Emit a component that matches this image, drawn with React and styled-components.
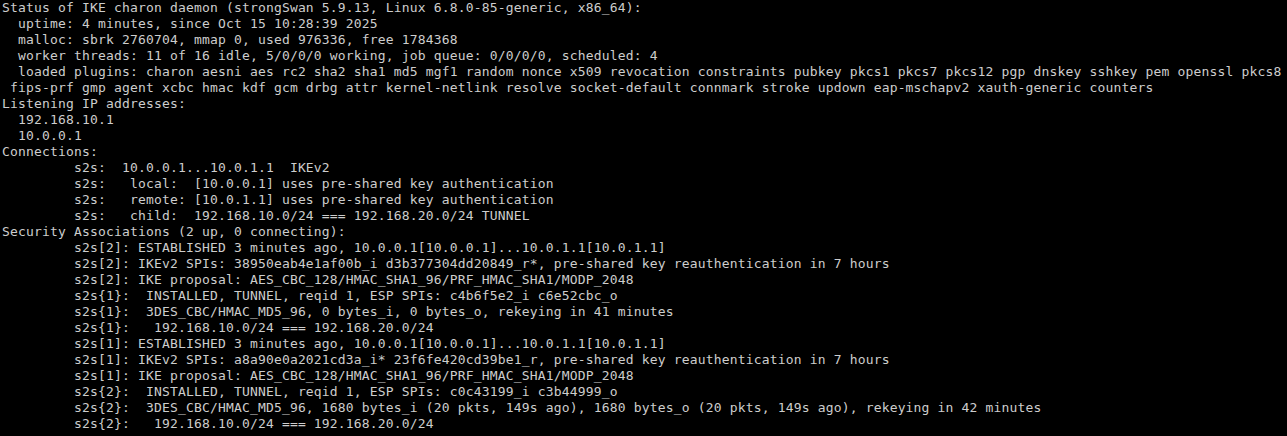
import React from 'react';
import styled, { createGlobalStyle } from 'styled-components';

// ipsec statusall output, one entry per console row (160 columns, so long lines are pre-wrapped)
const lines = [
  'Status of IKE charon daemon (strongSwan 5.9.13, Linux 6.8.0-85-generic, x86_64):',
  '  uptime: 4 minutes, since Oct 15 10:28:39 2025',
  '  malloc: sbrk 2760704, mmap 0, used 976336, free 1784368',
  '  worker threads: 11 of 16 idle, 5/0/0/0 working, job queue: 0/0/0/0, scheduled: 4',
  '  loaded plugins: charon aesni aes rc2 sha2 sha1 md5 mgf1 random nonce x509 revocation constraints pubkey pkcs1 pkcs7 pkcs12 pgp dnskey sshkey pem openssl pkcs8',
  ' fips-prf gmp agent xcbc hmac kdf gcm drbg attr kernel-netlink resolve socket-default connmark stroke updown eap-mschapv2 xauth-generic counters',
  'Listening IP addresses:',
  '  192.168.10.1',
  '  10.0.0.1',
  'Connections:',
  '         s2s:  10.0.0.1...10.0.1.1  IKEv2',
  '         s2s:   local:  [10.0.0.1] uses pre-shared key authentication',
  '         s2s:   remote: [10.0.1.1] uses pre-shared key authentication',
  '         s2s:   child:  192.168.10.0/24 === 192.168.20.0/24 TUNNEL',
  'Security Associations (2 up, 0 connecting):',
  '         s2s[2]: ESTABLISHED 3 minutes ago, 10.0.0.1[10.0.0.1]...10.0.1.1[10.0.1.1]',
  '         s2s[2]: IKEv2 SPIs: 38950eab4e1af00b_i d3b377304dd20849_r*, pre-shared key reauthentication in 7 hours',
  '         s2s[2]: IKE proposal: AES_CBC_128/HMAC_SHA1_96/PRF_HMAC_SHA1/MODP_2048',
  '         s2s{1}:  INSTALLED, TUNNEL, reqid 1, ESP SPIs: c4b6f5e2_i c6e52cbc_o',
  '         s2s{1}:  3DES_CBC/HMAC_MD5_96, 0 bytes_i, 0 bytes_o, rekeying in 41 minutes',
  '         s2s{1}:   192.168.10.0/24 === 192.168.20.0/24',
  '         s2s[1]: ESTABLISHED 3 minutes ago, 10.0.0.1[10.0.0.1]...10.0.1.1[10.0.1.1]',
  '         s2s[1]: IKEv2 SPIs: a8a90e0a2021cd3a_i* 23f6fe420cd39be1_r, pre-shared key reauthentication in 7 hours',
  '         s2s[1]: IKE proposal: AES_CBC_128/HMAC_SHA1_96/PRF_HMAC_SHA1/MODP_2048',
  '         s2s{2}:  INSTALLED, TUNNEL, reqid 1, ESP SPIs: c0c43199_i c3b44999_o',
  '         s2s{2}:  3DES_CBC/HMAC_MD5_96, 1680 bytes_i (20 pkts, 149s ago), 1680 bytes_o (20 pkts, 149s ago), rekeying in 42 minutes',
  '         s2s{2}:   192.168.10.0/24 === 192.168.20.0/24',
];

const App = () => {
  return (
    <>
      <GlobalStyle />
      <Console>
        {lines.map((text, i) => (
          <Line key={i}>{text}</Line>
        ))}
      </Console>
    </>
  );
};

export default App;

const GlobalStyle = createGlobalStyle`
  html, body {
    margin: 0;
    padding: 0;
    background: #000;
    overflow: hidden;
  }
`;

const Console = styled.div`
  display: flex;
  flex-direction: column;
  width: 1287px;
  height: 436px;
  padding-left: 2px;
  box-sizing: border-box;
  background: #000;
  overflow: hidden;
`;

const Line = styled.div`
  height: 16px;
  line-height: 16px;
  white-space: pre;
  font-family: "DejaVu Sans Mono", "Liberation Mono", monospace;
  font-size: 13px;
  letter-spacing: 0.17px;
  color: #cdcdcd;
`;
